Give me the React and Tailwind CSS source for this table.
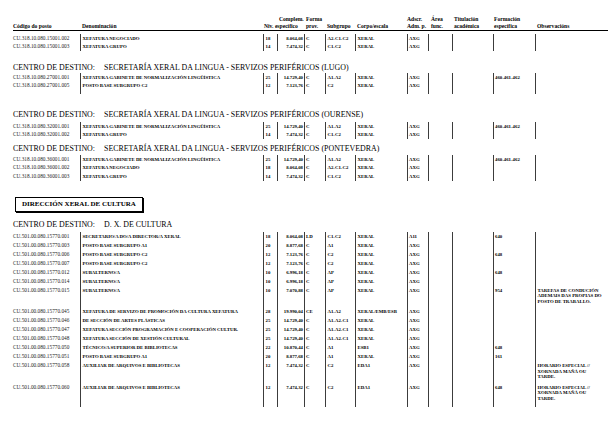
import React from "react";

const COLS =
  "grid grid-cols-[67px_183px_14px_27px_21px_30px_52px_21px_24px_41px_42px_74px]";

const top1 = [
  ["CU.318.10.080.15001.002", "XEFATURA NEGOCIADO", "18", "8.064,08", "C", "A2-C1-C2", "XERAL", "AXG", "", "", "", ""],
  ["CU.318.10.080.15001.003", "XEFATURA GRUPO", "14", "7.474,32", "C", "C1-C2", "XERAL", "AXG", "", "", "", ""],
];
const lugo = [
  ["CU.318.10.080.27001.001", "XEFATURA GABINETE DE NORMALIZACIÓN LINGÜÍSTICA", "25", "14.729,40", "C", "A1-A2", "XERAL", "AXG", "", "", "460-461-462", ""],
  ["CU.318.10.080.27001.005", "POSTO BASE SUBGRUPO C2", "12", "7.123,76", "C", "C2", "XERAL", "AXG", "", "", "", ""],
];
const ourense = [
  ["CU.318.10.080.32001.001", "XEFATURA GABINETE DE NORMALIZACIÓN LINGÜÍSTICA", "25", "14.729,40", "C", "A1-A2", "XERAL", "AXG", "", "", "460-461-462", ""],
  ["CU.318.10.080.32001.002", "XEFATURA GRUPO", "14", "7.474,32", "C", "C1-C2", "XERAL", "AXG", "", "", "", ""],
];
const ponte = [
  ["CU.318.10.080.36001.001", "XEFATURA GABINETE DE NORMALIZACIÓN LINGÜÍSTICA", "25", "14.729,40", "C", "A1-A2", "XERAL", "AXG", "", "", "460-461-462", ""],
  ["CU.318.10.080.36001.002", "XEFATURA NEGOCIADO", "18", "8.064,08", "C", "A2-C1-C2", "XERAL", "AXG", "", "", "", ""],
  ["CU.318.10.080.36001.003", "XEFATURA GRUPO", "14", "7.474,32", "C", "C1-C2", "XERAL", "AXG", "", "", "", ""],
];
const obs1 = ["TAREFAS DE CONDUCIÓN", "ADEMAIS DAS PROPIAS DO", "POSTO DE TRABALLO."];
const obs2 = ["HORARIO ESPECIAL //", "XORNADA MAÑÁ OU", "TARDE."];
const cultura = [
  ["CU.501.00.080.15770.001", "SECRETARIO/A DO/A DIRECTOR/A XERAL", "18", "8.064,08", "LD", "C1-C2", "XERAL", "A11", "", "", "640", ""],
  ["CU.501.00.080.15770.003", "POSTO BASE SUBGRUPO A1", "20", "8.877,68", "C", "A1", "XERAL", "AXG", "", "", "", ""],
  ["CU.501.00.080.15770.006", "POSTO BASE SUBGRUPO C2", "12", "7.123,76", "C", "C2", "XERAL", "AXG", "", "", "648", ""],
  ["CU.501.00.080.15770.007", "POSTO BASE SUBGRUPO C2", "12", "7.123,76", "C", "C2", "XERAL", "AXG", "", "", "", ""],
  ["CU.501.00.080.15770.012", "SUBALTERNO/A", "10", "6.996,18", "C", "AP", "XERAL", "AXG", "", "", "648", ""],
  ["CU.501.00.080.15770.014", "SUBALTERNO/A", "10", "6.996,18", "C", "AP", "XERAL", "AXG", "", "", "", ""],
  ["CU.501.00.080.15770.015", "SUBALTERNO/A", "10", "7.070,88", "C", "AP", "XERAL", "AXG", "", "", "954", obs1],
  ["CU.501.00.080.15770.045", "XEFATURA DE SERVIZO DE PROMOCIÓN DA CULTURA XEFATURA", "28", "19.990,04", "CE", "A1-A2", "XERAL/EMB/ESB", "AXG", "", "", "", ""],
  ["CU.501.00.080.15770.046", "DE SECCIÓN DE ARTES PLÁSTICAS", "25", "14.729,40", "C", "A1-A2-C1", "XERAL", "AXG", "", "", "", ""],
  ["CU.501.00.080.15770.047", "XEFATURA SECCIÓN PROGRAMACIÓN E COOPERACIÓN CULTUR.", "25", "14.729,40", "C", "A1-A2-C1", "XERAL", "AXG", "", "", "", ""],
  ["CU.501.00.080.15770.048", "XEFATURA SECCIÓN DE XESTIÓN CULTURAL", "25", "14.729,40", "C", "A1-A2-C1", "XERAL", "AXG", "", "", "", ""],
  ["CU.501.00.080.15770.050", "TÉCNICO/A SUPERIOR DE BIBLIOTECAS", "22", "10.870,44", "C", "A1", "ESB1", "AXG", "", "", "648", ""],
  ["CU.501.00.080.15770.051", "POSTO BASE SUBGRUPO A1", "20", "8.877,68", "C", "A1", "XERAL", "AXG", "", "", "161", ""],
  ["CU.501.00.080.15770.058", "AUXILIAR DE ARQUIVOS E BIBLIOTECAS", "12", "7.474,32", "C", "C2", "EDA1", "AXG", "", "", "", obs2],
  ["CU.501.00.080.15770.060", "AUXILIAR DE ARQUIVOS E BIBLIOTECAS", "12", "7.474,32", "C", "C2", "EDA1", "AXG", "", "", "648", obs2],
];

function Row({ r, tall }) {
  const pad = tall ? "py-[2px]" : "py-[1.75px]";
  const line = "border-l border-[#3c3c3c]";
  return (
    <>
      <div className={`${pad} font-normal text-[5.3px] leading-[5px] text-[#222] whitespace-nowrap`}>{r[0]}</div>
      <div className={`${pad} ${line} pl-[1.5px] whitespace-nowrap`}>{r[1]}</div>
      <div className={`${pad} ${line} pl-[1.5px]`}>{r[2]}</div>
      <div className={`${pad} ${line} pr-[1px] text-right whitespace-nowrap`}>{r[3]}</div>
      <div className={`${pad} ${line} pl-[1px]`}>{r[4]}</div>
      <div className={`${pad} ${line} pl-[1.5px] whitespace-nowrap`}>{r[5]}</div>
      <div className={`${pad} ${line} pl-[1.5px] whitespace-nowrap`}>{r[6]}</div>
      <div className={`${pad} ${line} pl-[1px]`}>{r[7]}</div>
      <div className={`${pad} ${line}`}>{r[8]}</div>
      <div className={`${pad} ${line}`}>{r[9]}</div>
      <div className={`${pad} ${line} pl-[1px] whitespace-nowrap`}>{r[10]}</div>
      <div className={`${pad} ${line} pl-[1.5px] whitespace-nowrap`}>
        {Array.isArray(r[11]) ? (
          <div className="leading-[5.5px] pb-[1px]">
            {r[11].map((t, i) => (
              <div key={i}>{t}</div>
            ))}
          </div>
        ) : (
          r[11]
        )}
      </div>
    </>
  );
}

function Group({ rows, tall, extra }) {
  return (
    <div className={`${COLS} font-bold text-[4.8px] leading-[5px] text-black`}>
      {rows.map((r, i) => (
        <Row key={i} r={r} tall={tall} />
      ))}
      {extra ? (
        <>
          <div className={extra}></div>
          {Array.from({ length: 11 }).map((_, i) => (
            <div key={i} className={`${extra} border-l border-[#3c3c3c]`}></div>
          ))}
        </>
      ) : null}
    </div>
  );
}

function Title({ name, mt }) {
  return (
    <div className={`${mt} flex h-[10px] items-center text-[7.9px] leading-[10px] text-black whitespace-nowrap`}>
      <span className="w-[91px] shrink-0">CENTRO DE DESTINO:</span>
      <span>{name}</span>
    </div>
  );
}

export default function App() {
  return (
    <div className="w-[615px] h-[439px] bg-white overflow-hidden font-['Liberation_Serif',serif] text-black">
      <div className="pl-[13px] pt-[16px]">
        <div className={`${COLS} w-[595px] font-bold text-[5.6px] leading-[6.5px] border-b border-black pb-[0.5px]`}>
          <div></div>
          <div></div>
          <div className="col-span-2 pl-[16px]">Complem.</div>
          <div className="pl-[2px]">Forma</div>
          <div></div>
          <div></div>
          <div>Adscr.</div>
          <div className="pl-[3px]">Área</div>
          <div className="pl-[2px]">Titulación</div>
          <div className="pl-[1px]">Formación</div>
          <div></div>

          <div className="whitespace-nowrap">Código do posto</div>
          <div className="pl-[2px]">Denominación</div>
          <div className="col-span-2 pl-[1px] whitespace-nowrap">Niv. específico</div>
          <div className="pl-[2px]">prov.</div>
          <div className="pl-[2px]">Subgrupo</div>
          <div className="pl-[2px] whitespace-nowrap">Corpo/escala</div>
          <div className="whitespace-nowrap">Adm. p.</div>
          <div className="pl-[3px]">func.</div>
          <div className="pl-[2px]">académica</div>
          <div className="pl-[1px]">específica</div>
          <div className="pl-[2px]">Observacións</div>
        </div>

        <div className="mt-[3.5px]">
          <Group rows={top1} />
        </div>

        <Title mt="mt-[12px]" name="SECRETARÍA XERAL DA LINGUA - SERVIZOS PERIFÉRICOS (LUGO)" />
        <Group rows={lugo} extra="h-[4px]" />

        <Title mt="mt-[16px]" name="SECRETARÍA XERAL DA LINGUA - SERVIZOS PERIFÉRICOS (OURENSE)" />
        <div className="mt-[2px]">
          <Group rows={ourense} />
        </div>

        <Title mt="mt-[5px]" name="SECRETARÍA XERAL DA LINGUA - SERVIZOS PERIFÉRICOS (PONTEVEDRA)" />
        <div className="mt-[1px]">
          <Group rows={ponte} />
        </div>

        <div className="mt-[16.5px] ml-[2px] w-[128px] h-[15px] border border-black shadow-[1px_1px_0_#000] flex items-center pl-[6px] font-bold text-[7px] whitespace-nowrap">
          DIRECCIÓN XERAL DE CULTURA
        </div>

        <Title mt="mt-[8px]" name="D. X. DE CULTURA" />
        <div className="mt-[1.5px]">
          <Group rows={cultura} tall extra="h-[3px]" />
        </div>
      </div>
    </div>
  );
}
